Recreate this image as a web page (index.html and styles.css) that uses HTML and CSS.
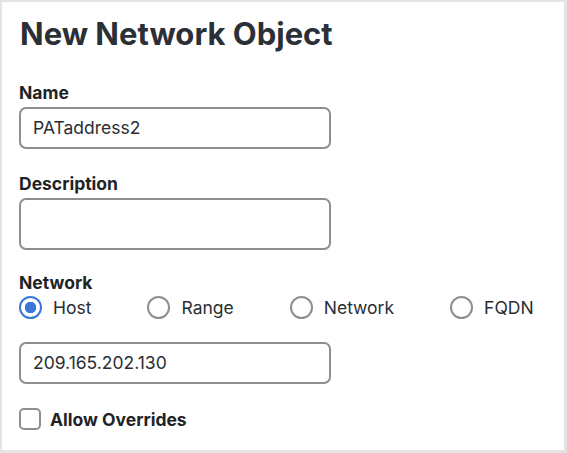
FILE: index.html
```html
<!DOCTYPE html>
<html>
<head>
<meta charset="utf-8">
<link rel="stylesheet" href="styles.css">
</head>
<body>
<div class="frame">
  <h1 class="title">New Network Object</h1>
  <div class="field">
    <label class="label">Name</label>
    <div class="input">PATaddress2</div>
  </div>
  <div class="field">
    <label class="label">Description</label>
    <div class="input tall"></div>
  </div>
  <div class="field net">
    <label class="label">Network</label>
    <div class="radios">
      <div class="radio"><span class="dot checked"></span><span>Host</span></div>
      <div class="radio"><span class="dot"></span><span>Range</span></div>
      <div class="radio"><span class="dot"></span><span>Network</span></div>
      <div class="radio"><span class="dot"></span><span>FQDN</span></div>
    </div>
    <div class="input ip">209.165.202.130</div>
  </div>
  <div class="check"><span class="box"></span><span class="check-label">Allow Overrides</span></div>
</div>
</body>
</html>
```
FILE: styles.css
```css
html, body { margin: 0; padding: 0; background: #fff; }
body { width: 567px; height: 453px; overflow: hidden; font-family: Inter, "Noto Sans", sans-serif; color: #23282e; }
.frame {
  box-sizing: border-box;
  width: 567px; height: 453px;
  border: 2px solid #e4e4e4;
  border-right-width: 3px; border-bottom-width: 3px;
  padding: 14px 0 0 17px;
}
.title { margin: 0 0 32px 1px; font-size: 31px; font-weight: 700; line-height: 35px; letter-spacing: 0; color: #2b3036; }
.field { display: flex; flex-direction: column; }
.label { font-size: 17.5px; font-weight: 700; line-height: 20px; margin-bottom: 4px; color: #1f2327; }
.input {
  box-sizing: border-box; width: 312px; height: 42px;
  border: 2px solid #8b8e92; border-radius: 7px;
  padding: 0 12px; font-size: 17.5px; line-height: 38px; color: #2a2e33;
  margin-bottom: 25px;
}
.input.tall { height: 52px; margin-bottom: 23px; }
.radios { display: flex; gap: 56px; margin: -2px 0 0 0; height: 24px; align-items: center; }
.radio { display: flex; align-items: center; gap: 11px; font-size: 17.5px; color: #2a2e33; }
.dot { box-sizing: border-box; width: 23px; height: 23px; border-radius: 50%; border: 2px solid #8b8e92; display: inline-block; }
.dot.checked { border-color: #3a77d6; background: radial-gradient(circle, #3a77d6 0 5.5px, #fff 6px); }
.ip { margin-top: 23px; margin-bottom: 24px; }
.check { display: flex; align-items: center; gap: 9px; }
.box { box-sizing: border-box; width: 22px; height: 22px; border: 2px solid #8b8e92; border-radius: 5px; }
.check-label { font-size: 17.5px; font-weight: 700; color: #1f2327; }
```
